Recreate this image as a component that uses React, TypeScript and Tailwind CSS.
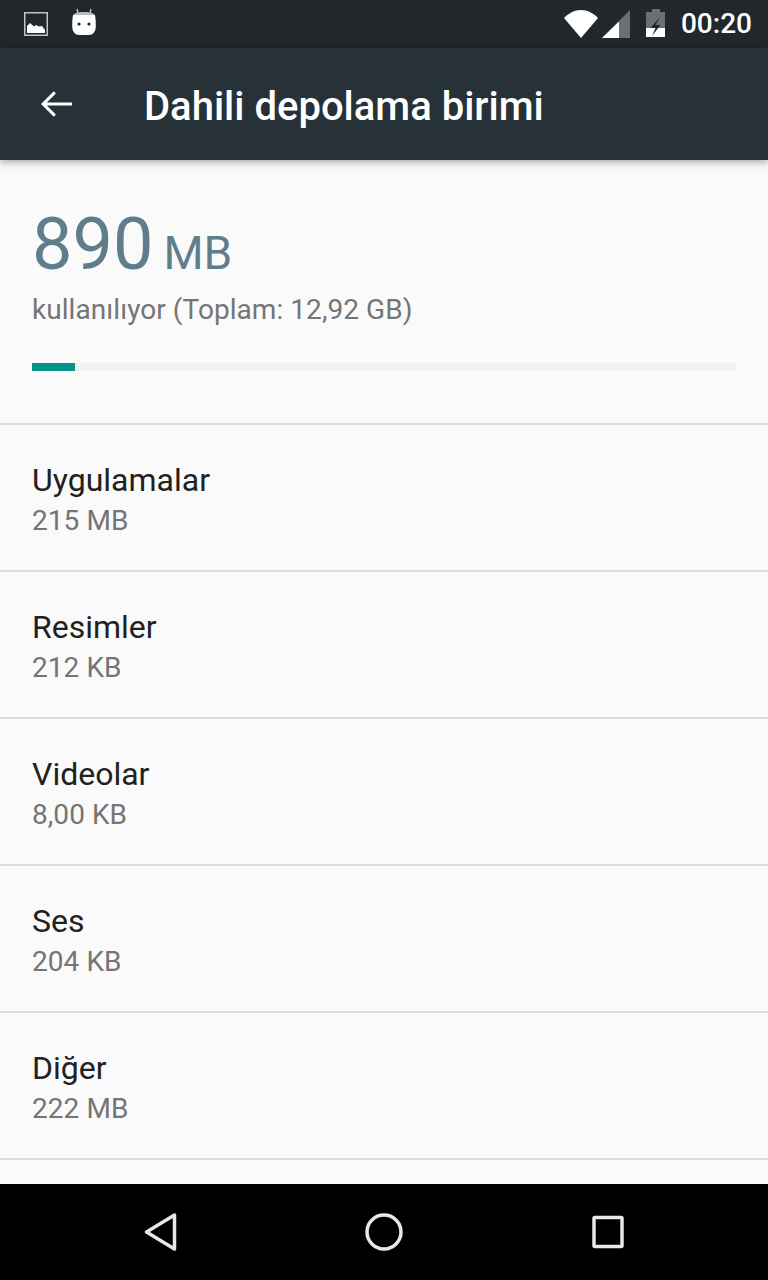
const rows = [
  { title: 'Uygulamalar', size: '215 MB' },
  { title: 'Resimler', size: '212 KB' },
  { title: 'Videolar', size: '8,00 KB' },
  { title: 'Ses', size: '204 KB' },
  { title: 'Diğer', size: '222 MB' },
]

function StatusBar() {
  return (
    <div className="h-12 shrink-0 bg-[#21272b] flex items-center">
      <svg width="24" height="24" viewBox="0 0 24 24" className="ml-6">
        <rect x="0.75" y="0.75" width="22.5" height="22.5" fill="none" stroke="#c4c4c4" strokeWidth="1.5" />
        <path d="M3 21v-7l3-3 4 3.500 2-1.500 3 1.500 3-.5 3 4V21z" fill="#ffffff" />
      </svg>
      <svg width="24" height="28" viewBox="0 0 24 28" className="ml-[24px] mb-[4px]">
        <path d="M6.500 7 5 1M17.500 7 19 1" stroke="#bdbdbd" strokeWidth="1.500" fill="none" />
        <path d="M1.500 7.500c0-2 3-3.500 10.500-3.500s10.500 1.500 10.500 3.500z" fill="#bdbdbd" />
        <path d="M1 7h22c.6 3 .8 7 .8 11 0 6-3 9-7 9H7.200c-4 0-7-3-7-9 0-4 .2-8 .8-11z" fill="#ffffff" />
        <circle cx="7" cy="16" r="1.600" fill="#21272b" />
        <circle cx="17" cy="16" r="1.600" fill="#21272b" />
      </svg>
      <div className="ml-auto flex items-center">
        <svg width="36" height="30" viewBox="0 0 36 30" className="mb-[-2px]">
          <path d="M18 28 1 8c4.500-4.500 10.500-8 17-8s12.500 3.500 17 8z" fill="#ffffff" />
        </svg>
        <svg width="30" height="30" viewBox="0 0 30 30" className="ml-[2px] mb-[-2px]">
          <path d="M29 0v28H1z" fill="#6b7172" />
          <path d="M18 11.500V28H1z" fill="#ffffff" />
        </svg>
        <svg width="20" height="30" viewBox="0 0 20 30" className="ml-[15px] mb-[2px]">
          <path d="M6 1h8v3h5v25H0V4h6z" fill="#6b7172" />
          <path d="M0 20h19v9H0z" fill="#ffffff" />
          <path d="M14 9 4.500 20h5L6 28l8.500-11H9.500z" fill="#21272b" />
        </svg>
        <span className="ml-[15px] mr-4 text-[28px] font-medium text-white">00:20</span>
      </div>
    </div>
  )
}

function Toolbar() {
  return (
    <div className="relative z-10 h-[112px] shrink-0 bg-[#263238] flex items-center shadow-[0_2px_8px_rgba(0,0,0,0.35)]">
      <svg width="32" height="32" viewBox="0 0 32 32" className="ml-10">
        <path d="M32 14.500H6.800l9.100-9.100L13.800 3.300 1 16l12.800 12.700 2.100-2.100-9.100-9.100H32z" fill="#ffffff" />
      </svg>
      <h1 className="ml-[72px] pt-[6px] text-[40px] leading-[56px] font-medium text-white">Dahili depolama birimi</h1>
    </div>
  )
}

function NavBar() {
  return (
    <div className="h-24 shrink-0 bg-black flex items-center">
      <svg width="36" height="40" viewBox="0 0 36 40" className="ml-[142px]">
        <path d="M32.500 3 4.500 20l28 17z" fill="none" stroke="#e8e8e8" strokeWidth="3.500" strokeLinejoin="round" />
      </svg>
      <svg width="40" height="40" viewBox="0 0 40 40" className="ml-[186px]">
        <circle cx="20" cy="20" r="17" fill="none" stroke="#e8e8e8" strokeWidth="3.500" />
      </svg>
      <svg width="36" height="36" viewBox="0 0 36 36" className="ml-[186px]">
        <rect x="4" y="3.500" width="28" height="29" rx="1" fill="none" stroke="#e8e8e8" strokeWidth="3.500" />
      </svg>
    </div>
  )
}

export default function App() {
  return (
    <div className="w-[768px] h-[1280px] flex flex-col overflow-hidden bg-[#fafafa] font-['Roboto',sans-serif]">
      <StatusBar />
      <Toolbar />
      <div className="flex-1 overflow-hidden">
        <div className="h-[265px] px-8 pt-[49px] border-b-2 border-[#dcdcdc]">
          <div className="flex items-baseline text-[#607d8b] leading-none h-[83px]">
            <span className="text-[72px]">890</span>
            <span className="ml-[10px] text-[46px]">MB</span>
          </div>
          <p className="text-[28px] leading-[36px] tracking-[0.06px] text-[#757575]">kullanılıyor (Toplam: 12,92 GB)</p>
          <div className="mt-[35px] h-2 bg-[#f2f2f2]">
            <div className="h-2 w-[43px] bg-[#009688]" />
          </div>
        </div>
        {rows.map(row => (
          <div key={row.title} className="h-[147px] px-8 pt-[33px] border-b-2 border-[#dcdcdc]">
            <p className="text-[32px] leading-[45px] text-[#212121]">{row.title}</p>
            <p className="text-[28px] leading-[36px] tracking-[0.06px] text-[#757575]">{row.size}</p>
          </div>
        ))}
      </div>
      <NavBar />
    </div>
  )
}
